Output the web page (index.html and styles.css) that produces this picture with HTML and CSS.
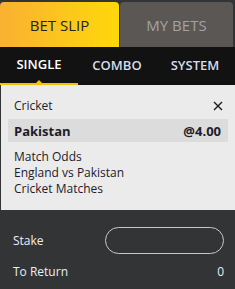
FILE: index.html
```html
<!DOCTYPE html>
<html>
<head>
<meta charset="utf-8">
<link rel="stylesheet" href="styles.css">
</head>
<body>
<div class="slip">
  <div class="tabs">
    <div class="tab tab-active">BET SLIP</div>
    <div class="tab tab-other">MY BETS</div>
  </div>
  <div class="subnav">
    <div class="sub sub-active">SINGLE</div>
    <div class="sub">COMBO</div>
    <div class="sub">SYSTEM</div>
  </div>
  <div class="bet">
    <div class="bet-head">
      <span>Cricket</span>
      <svg class="close" width="10" height="10" viewBox="0 0 10 10"><path d="M1 1L9 9M9 1L1 9" stroke="#1b1b1b" stroke-width="1.4"/></svg>
    </div>
    <div class="pick">
      <span>Pakistan</span>
      <span>@4.00</span>
    </div>
    <div class="info">
      <div>Match Odds</div>
      <div>England vs Pakistan</div>
      <div>Cricket Matches</div>
    </div>
  </div>
  <div class="stake">
    <div class="row">
      <span>Stake</span>
      <div class="input"></div>
    </div>
    <div class="row row-ret">
      <span>To Return</span>
      <span>0</span>
    </div>
  </div>
</div>
</body>
</html>
```
FILE: styles.css
```css
html, body {
  margin: 0;
  padding: 0;
  background: #333436;
}
.slip {
  width: 235px;
  height: 289px;
  font-family: "Open Sans", "Noto Sans", sans-serif;
  background: #333436;
  padding-top: 2px;
  box-sizing: border-box;
}
.tabs {
  display: flex;
  height: 45px;
  gap: 1px;
  padding-right: 2px;
}
.tab {
  display: flex;
  align-items: center;
  justify-content: center;
  font-size: 15px;
  border-radius: 4px 4px 0 0;
}
.tab-active {
  width: 119px;
  background: linear-gradient(90deg, #f9b132 0%, #fed80a 100%);
  color: #222;
}
.tab-other {
  flex: 1;
  background: #5b5754;
  color: #a3a3a3;
}
.subnav {
  display: flex;
  height: 38px;
  background: #121212;
  padding-right: 1px;
}
.sub {
  flex: 1;
  display: flex;
  align-items: center;
  justify-content: center;
  padding-bottom: 2px;
  font-size: 13px;
  font-weight: 600;
  color: #d6dde8;
  position: relative;
}
.sub-active {
  color: #fff;
  border-bottom: 2px solid #f6c200;
}
.sub-active::after {
  content: "";
  position: absolute;
  left: 50%;
  bottom: 0;
  margin-left: -3px;
  border-left: 3px solid transparent;
  border-right: 3px solid transparent;
  border-bottom: 3px solid #f6c200;
}
.bet {
  background: #ebebeb;
  margin-left: 1px;
  height: 125px;
  padding: 12px 7px 0 7px;
  box-sizing: border-box;
  color: #1c1c2c;
}
.bet-head {
  display: flex;
  justify-content: space-between;
  align-items: center;
  font-size: 12px;
  padding: 0 5px 0 6px;
  height: 17px;
}
.pick {
  margin-top: 5px;
  height: 23px;
  background: #dcdcdc;
  display: flex;
  justify-content: space-between;
  align-items: center;
  padding: 0 7px 0 6px;
  font-size: 13px;
  font-weight: 700;
}
.info {
  padding: 7px 6px 0 6px;
  font-size: 12px;
  line-height: 16px;
}
.stake {
  padding: 17px 11px 0 13px;
  color: #e9eef5;
  font-size: 12px;
}
.row {
  display: flex;
  justify-content: space-between;
  align-items: center;
}
.input {
  width: 117px;
  height: 25px;
  border: 1px solid #c8c8c8;
  border-radius: 14px;
}
.row-ret {
  margin-top: 9px;
}
```
